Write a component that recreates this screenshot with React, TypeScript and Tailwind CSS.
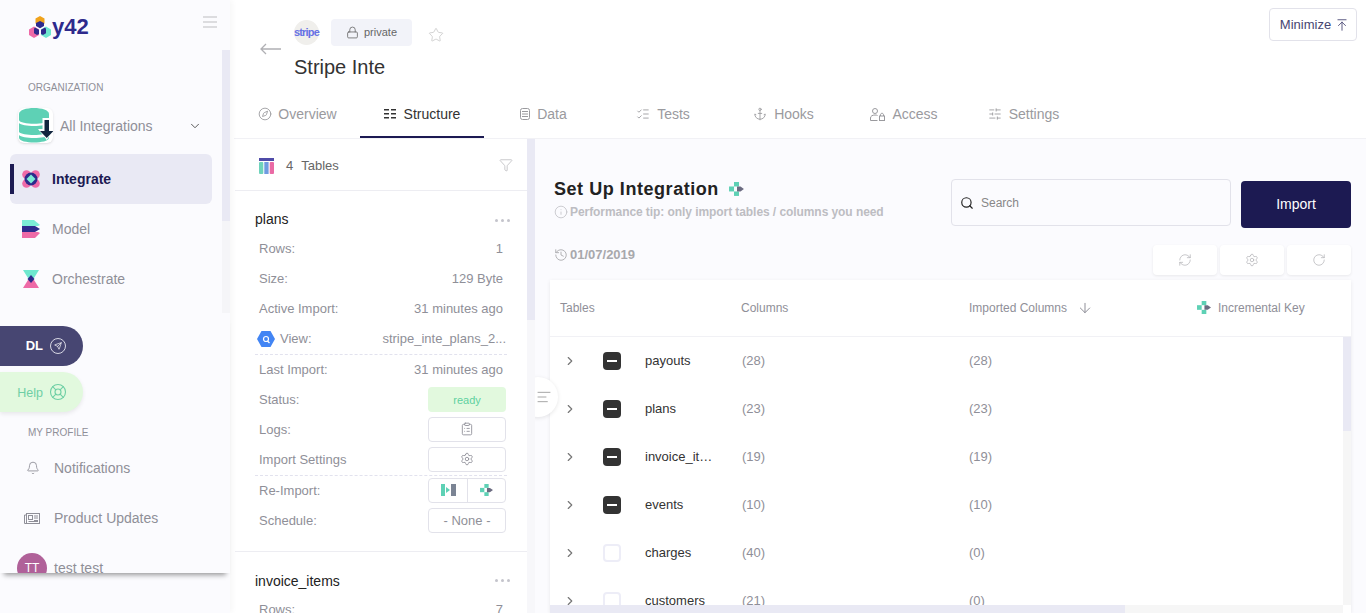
import React from 'react';
import {
  ArrowDown,
  ArrowUpToLine,
  Bell,
  ChevronDown,
  ChevronRight,
  ClipboardList,
  Compass,
  Filter,
  History,
  Info,
  LifeBuoy,
  ListChecks,
  Lock,
  Anchor,
  RefreshCw,
  RotateCw,
  Search,
  Send,
  Settings,
  SlidersHorizontal,
  Star,
  AlignLeft,
} from 'lucide-react';

const font = "font-['Liberation_Sans',Arial,sans-serif]";

const Logo = () => (
  <svg width="22" height="22" viewBox="0 0 22 22">
    <path d="M11 0l4.500 2.500v5L11 10 6.500 7.500v-5z" fill="#f0a31c" />
    <path d="M5 10.500l5 3v5.500l-5 3-5-3v-5.500z" fill="#ee6aa7" />
    <path d="M17 10.500l5 3v5.500l-5 3-5-3v-5.500z" fill="#6fe8cf" />
    <path d="M11 5l4 2v3l-3.500 2-.5 .3-.5-.3L7 10V7z" fill="#2e2a8c" />
    <path d="M6 11.500l4 2.300V18l-2 1-3-1.800v-4.500z" fill="#2e2a8c" />
    <path d="M16 11.500l-4 2.300V18l2 1 3-1.800v-4.500z" fill="#2e2a8c" />
  </svg>
);

const Burger = () => (
  <svg width="14" height="12" viewBox="0 0 14 12" fill="#dcdcdf">
    <rect width="14" height="2" />
    <rect y="5" width="14" height="2" />
    <rect y="10" width="14" height="2" />
  </svg>
);

const BackArrow = () => (
  <svg width="21" height="12" viewBox="0 0 21 12" fill="none" stroke="#b0b0b4" strokeWidth="1.300">
    <path d="M21 6H1M6 1L1 6l5 5" />
  </svg>
);

const IntegrateIcon = () => (
  <svg width="18" height="18" viewBox="0 0 18 18">
    <circle cx="4.500" cy="4.500" r="4.300" fill="#ee6aa7" />
    <circle cx="13.500" cy="4.500" r="4.300" fill="#ee6aa7" />
    <circle cx="4.500" cy="13.500" r="4.300" fill="#ee6aa7" />
    <circle cx="13.500" cy="13.500" r="4.300" fill="#ee6aa7" />
    <circle cx="9" cy="9" r="6.500" fill="#2e2a8c" />
    <path d="M9 4.500l4.500 4.500L9 13.500 4.500 9z" fill="#7cecd6" />
  </svg>
);

const ModelIcon = () => (
  <svg width="18" height="18" viewBox="0 0 18 18">
    <path d="M0 0h12l6 5-2 1H0z" fill="#7cecd6" />
    <path d="M0 12h16l2 1-5 5H0z" fill="#ee6aa7" />
    <path d="M0 6h13l5 3-5 3H0z" fill="#2e2a8c" />
  </svg>
);

const OrchestrateIcon = () => (
  <svg width="16" height="18" viewBox="0 0 16 18">
    <path d="M0 0h16l-5 8H5z" fill="#6fe8cf" />
    <path d="M5 10h6l5 8H0z" fill="#ee6aa7" />
    <path d="M8 5l3.500 4L8 13 4.500 9z" fill="#2e2a8c" />
  </svg>
);

const DbIcon = () => (
  <div className="flex h-[35px] w-[35px] items-center justify-center rounded-md bg-white shadow-sm">
    <svg width="35" height="35" viewBox="0 0 35 35">
      <path d="M1 6c0-8 30-8 30 0v6c-1 5-29 5-30 0z" fill="#5ed1b5" />
      <path d="M1 15c3 4 27 4 30 0v9c-3 4-27 4-30 0z" fill="#5ed1b5" />
      <path d="M1 27c3 4 27 4 30 0v3c-1 6-29 6-30 0z" fill="#5ed1b5" />
      <path d="M24.500 10h8.500v11h3L28.750 32 20 21h4.500z" fill="#fff" />
      <path d="M26.500 12h4.500v11h4.500L28.750 30 22 23h4.500z" fill="#12263f" />
    </svg>
  </div>
);

const NewsIcon = () => (
  <svg width="16" height="11" viewBox="0 0 16 11" fill="none" stroke="#8f8f98" strokeWidth="1">
    <rect x="2.500" y="0.500" width="13" height="10" />
    <path d="M2.500 2H.5v8.500h2" />
    <rect x="4.500" y="2.500" width="4" height="4" />
    <path d="M10 3h4M10 5h4M10 7.500h4M4.500 8.500H14" />
  </svg>
);

const DataIcon = () => (
  <svg width="10" height="12" viewBox="0 0 10 12" fill="none" stroke="currentColor" strokeWidth="1">
    <rect x="0.500" y="0.500" width="9" height="11" rx="2" />
    <path d="M2 3.500h6M2 6h6M2 8.500h6" />
  </svg>
);

const AccessIcon = () => (
  <svg width="15" height="13" viewBox="0 0 15 13" fill="none" stroke="currentColor" strokeWidth="1">
    <circle cx="5" cy="3" r="2.500" />
    <path d="M.5 12.500V10c0-2 2-3 4.500-3 1 0 2 .2 2.500 .5M.5 12.500h7" />
    <rect x="9.500" y="8" width="5" height="4.500" />
    <path d="M10.500 8V6.800c0-2 3-2 3 0V8" />
  </svg>
);

const IncrementalIcon = ({ size = 15 }: { size?: number }) => (
  <svg width={size} height={size * 0.93} viewBox="0 0 15 14">
    <rect x="5" y="0" width="5" height="4.500" fill="#5ed1b5" />
    <rect x="0" y="4.500" width="5" height="5" fill="#5ed1b5" />
    <rect x="5" y="9.500" width="5" height="4.500" fill="#5ed1b5" />
    <path d="M8 4.500h3.500L15 7l-3.500 2.500H8z" fill="#6b6b80" />
  </svg>
);

const FullImportIcon = () => (
  <svg width="15" height="12" viewBox="0 0 15 12">
    <rect x="0" y="0" width="4" height="12" fill="#5ed1b5" />
    <path d="M5 3l4 3-4 3z" fill="#5ed1b5" />
    <rect x="10" y="0" width="5" height="12" fill="#7b8494" />
  </svg>
);

const TablesIcon = () => (
  <svg width="15" height="16" viewBox="0 0 15 16">
    <rect x="0" y="0" width="15" height="3" fill="#4f4ba8" />
    <rect x="0" y="4" width="4.300" height="12" rx="1" fill="#6fd3bb" />
    <rect x="5.300" y="4" width="4.300" height="12" fill="#6f9be0" />
    <rect x="10.700" y="4" width="4.300" height="12" rx="1" fill="#ea6aa5" />
  </svg>
);

const StructureIcon = () => (
  <svg width="12" height="10" viewBox="0 0 12 10" fill="#333">
    <rect x="0" y="0" width="5" height="1.500" />
    <rect x="0" y="4" width="5" height="1.500" />
    <rect x="0" y="8" width="5" height="1.500" />
    <rect x="7" y="0" width="5" height="1.500" />
    <rect x="7" y="4" width="5" height="1.500" />
    <rect x="7" y="8" width="5" height="1.500" />
  </svg>
);

const BigQueryIcon = () => (
  <svg width="18" height="16" viewBox="0 0 18 16">
    <path d="M4.500 0h9L18 8l-4.500 8h-9L0 8z" fill="#4285f4" />
    <circle cx="9" cy="8" r="2.500" fill="none" stroke="#fff" strokeWidth="1.200" />
    <path d="M10.500 10l2 2" stroke="#fff" strokeWidth="1.200" />
  </svg>
);

const tabs = [
  { label: 'Overview', icon: <Compass size={14} strokeWidth={1.5} />, w: 'w-[125px]', gap: 'gap-[6px]' },
  { label: 'Structure', icon: <StructureIcon />, w: 'w-[124px]', gap: 'gap-[8px]', active: true },
  { label: 'Data', icon: <DataIcon />, w: 'w-[119px]', gap: 'gap-[7px]' },
  { label: 'Tests', icon: <ListChecks size={14} strokeWidth={1.5} />, w: 'w-[120px]', gap: 'gap-[7px]' },
  { label: 'Hooks', icon: <Anchor size={14} strokeWidth={1.5} />, w: 'w-[121px]', gap: 'gap-[7px]' },
  { label: 'Access', icon: <AccessIcon />, w: 'w-[120px]', gap: 'gap-[7px]' },
  { label: 'Settings', icon: <SlidersHorizontal size={14} strokeWidth={1.5} />, w: 'w-[119px]', gap: 'gap-[7px]' },
];

const rows = [
  { name: 'payouts', cols: 28, imported: 28, on: true },
  { name: 'plans', cols: 23, imported: 23, on: true },
  { name: 'invoice_it…', cols: 19, imported: 19, on: true },
  { name: 'events', cols: 10, imported: 10, on: true },
  { name: 'charges', cols: 40, imported: 0, on: false },
  { name: 'customers', cols: 21, imported: 0, on: false },
];

const InfoRow = ({ label, value }: { label: string; value: string }) => (
  <div className="flex h-[30px] items-center justify-between pr-[24px] pl-[24px] text-[13px] text-[#8f8f98]">
    <span>{label}</span>
    <span>{value}</span>
  </div>
);

const ActionRow = ({ label, children }: { label: string; children: React.ReactNode }) => (
  <div className="flex h-[30px] items-center justify-between pr-[21px] pl-[24px] text-[13px] text-[#8f8f98]">
    <span>{label}</span>
    {children}
  </div>
);

const Btn = ({ children }: { children: React.ReactNode }) => (
  <div className="-mt-[2px] flex h-[25px] w-[78px] items-center justify-center rounded border border-[#e2e2ea] bg-white text-[#8f8f98]">
    {children}
  </div>
);

const Dots = () => (
  <div className="flex gap-[3px]">
    <span className="h-[3px] w-[3px] rounded-full bg-[#c4c4cc]" />
    <span className="h-[3px] w-[3px] rounded-full bg-[#c4c4cc]" />
    <span className="h-[3px] w-[3px] rounded-full bg-[#c4c4cc]" />
  </div>
);

export default function App() {
  return (
    <div className={`flex h-screen w-full overflow-hidden bg-white ${font}`}>
      {/* Sidebar */}
      <aside className="z-20 flex w-[230px] shrink-0 flex-col bg-[#fbfbfe] shadow-[2px_0_6px_rgba(0,0,0,0.04)]">
        <div className="flex h-[313px] shrink-0">
          <div className="w-[222px] shrink-0">
            <div className="flex h-[57px] items-start justify-between pt-[16px] pr-[5px] pl-[29px]">
              <div className="flex items-center gap-[1px]">
                <Logo />
                <span className="text-[22px] leading-[22px] font-bold text-[#2e2a8c]">y42</span>
              </div>
              <Burger />
            </div>
            <div className="pt-[25px] pl-[28px] text-[10px] leading-[12px] text-[#8f8f98] uppercase">Organization</div>
            <div className="mt-[14px] flex h-[35px] items-center pr-[20px] pl-[18px]">
              <DbIcon />
              <span className="ml-[7px] flex-1 text-sm text-[#8f8f98]">All Integrations</span>
              <ChevronDown size={14} strokeWidth={1.5} className="text-[#444]" />
            </div>
            <div className="relative mt-[11px] ml-[10px] flex h-[50px] w-[202px] items-center rounded-md bg-[#e9e9f4] pl-[12px]">
              <span className="absolute top-[10px] left-0 h-[30px] w-[4px] bg-[#1c1a52]" />
              <IntegrateIcon />
              <span className="ml-[12px] text-sm font-bold text-[#1c1a52]">Integrate</span>
            </div>
            <div className="flex h-[50px] items-center pl-[22px]">
              <ModelIcon />
              <span className="ml-[12px] text-sm text-[#8f8f98]">Model</span>
            </div>
            <div className="flex h-[50px] items-center pl-[23px]">
              <OrchestrateIcon />
              <span className="ml-[13px] text-sm text-[#8f8f98]">Orchestrate</span>
            </div>
          </div>
          <div className="mt-[50px] w-[8px] bg-[#f5f5f8]">
            <div className="h-[171px] bg-[#e9e9f4]" />
          </div>
        </div>

        <div className="z-10 h-[260px] shrink-0 overflow-hidden bg-[#fbfbfe] pt-[13px] shadow-[0_6px_5px_-4px_rgba(0,0,0,0.4)]">
          <div className="flex h-[40px] w-[83px] items-center justify-end gap-[7px] rounded-r-full bg-[#474672] pr-[17px] text-[13px] font-bold text-white">
            DL
            <span className="flex h-[16px] w-[16px] items-center justify-center rounded-full border border-[#d8d8e4]">
              <Send size={8} />
            </span>
          </div>
          <div className="mt-[6px] flex h-[40px] w-[83px] items-center justify-end gap-[6px] rounded-r-full bg-[#e2f9de] pr-[16px] text-[12.500px] text-[#6fcfa5] shadow-[0_2px_4px_rgba(0,0,0,0.08)]">
            <span className="pt-[2px]">Help</span>
            <LifeBuoy size={18} strokeWidth={1.5} />
          </div>
          <div className="mt-[15px] pl-[28px] text-[10px] leading-[12px] text-[#8f8f98] uppercase">My Profile</div>
          <div className="mt-[4px] flex h-[50px] items-center pl-[25px] text-sm text-[#8f8f98]">
            <Bell size={14} className="ml-[1px]" strokeWidth={1.5} />
            <span className="ml-[14px]">Notifications</span>
          </div>
          <div className="flex h-[50px] items-center pl-[24px] text-sm text-[#8f8f98]">
            <NewsIcon />
            <span className="ml-[14px]">Product Updates</span>
          </div>
          <div className="mt-[10px] flex items-center pl-[17px] text-sm text-[#8f8f98]">
            <span className="flex h-[30px] w-[30px] items-center justify-center rounded-full bg-[#b06199] text-xs text-white">TT</span>
            <span className="ml-[7px]">test test</span>
          </div>
        </div>
      </aside>

      {/* Main */}
      <main className="ml-[4px] flex min-w-0 flex-1 flex-col">
        <header className="h-[139px] shrink-0 border-b border-[#f1f1f5] bg-white">
          <div className="flex h-[95px] items-start justify-between pr-[9px]">
            <div className="flex items-start">
              <div className="mt-[43px] ml-[26px]">
                <BackArrow />
              </div>
              <div className="ml-[13px] pt-[19px]">
                <div className="flex items-center">
                  <span className="flex h-[25px] w-[25px] items-center justify-center rounded-full bg-[#f0efec] text-[11px] font-bold tracking-[-0.8px] text-[#6772e5]">
                    stripe
                  </span>
                  <span className="ml-[12px] flex h-[27px] w-[81px] items-center justify-center gap-[5px] rounded bg-[#f2f3f9] text-[11px] text-[#666]">
                    <Lock size={13} strokeWidth={1.5} />
                    private
                  </span>
                  <Star size={16} strokeWidth={1.2} className="mt-[4px] ml-[16px] text-[#c8c8c8]" />
                </div>
                <div className="mt-[8px] text-xl leading-[26px] text-[#333]">Stripe Inte</div>
              </div>
            </div>
            <div className="mt-[8px] flex h-[33px] w-[88px] items-center justify-center gap-[4px] rounded border border-[#e2e2ea] pl-[3px] text-[13px] text-[#474672]">
              Minimize
              <ArrowUpToLine size={14} strokeWidth={1.5} />
            </div>
          </div>
          <nav className="flex h-[43px] pl-[1px]">
            {tabs.map((tab) => (
              <div
                key={tab.label}
                className={`flex h-full items-center justify-center border-b-2 pb-[3px] text-sm ${tab.gap} ${tab.w} ${
                  tab.active ? 'border-[#1c1a52] text-[#333]' : 'border-transparent text-[#9a9a9e]'
                }`}
              >
                {tab.icon}
                {tab.label}
              </div>
            ))}
          </nav>
        </header>

        <div className="flex min-h-0 flex-1">
          {/* Tables list */}
          <section className="relative z-10 w-[293px] shrink-0 overflow-hidden bg-white pl-[1px]">
            <div className="flex h-[52px] items-center justify-between border-b border-[#ededf2] pr-[14px] pl-[24px]">
              <div className="flex items-center pt-[3px] text-[13px] text-[#666]">
                <TablesIcon />
                <span className="ml-[12px]">4</span>
                <span className="ml-[8px]">Tables</span>
              </div>
              <Filter size={14} strokeWidth={1.3} className="text-[#b8b8bc]" />
            </div>
            <div className="flex h-[43px] items-end justify-between pr-[17px] pb-[5px] pl-[20px] text-sm text-[#222]">
              plans
              <div className="pb-[7px]">
                <Dots />
              </div>
            </div>
            <div>
              <InfoRow label="Rows:" value="1" />
              <InfoRow label="Size:" value="129 Byte" />
              <InfoRow label="Active Import:" value="31 minutes ago" />
              <div className="mr-[20px] ml-[20px] flex h-[31px] items-center justify-between border-b border-dashed border-[#e2e2ee] pr-[1px] pl-[2px] text-[13px] text-[#8f8f98]">
                <span className="flex items-center gap-[5px]">
                  <BigQueryIcon />
                  View:
                </span>
                <span>stripe_inte_plans_2...</span>
              </div>
              <InfoRow label="Last Import:" value="31 minutes ago" />
              <ActionRow label="Status:">
                <div className="-mt-[2px] flex h-[25px] w-[78px] items-center justify-center rounded bg-[#e2f9de] pt-[2px] text-[11px] text-[#5ed1a0]">ready</div>
              </ActionRow>
              <ActionRow label="Logs:">
                <Btn>
                  <ClipboardList size={14} strokeWidth={1.5} />
                </Btn>
              </ActionRow>
              <div className="mr-[20px] ml-[20px] flex h-[31px] items-center justify-between border-b border-dashed border-[#e2e2ee] pr-[1px] pl-[4px] text-[13px] text-[#8f8f98]">
                <span>Import Settings</span>
                <Btn>
                  <Settings size={14} strokeWidth={1.5} />
                </Btn>
              </div>
              <ActionRow label="Re-Import:">
                <div className="-mt-[2px] flex h-[25px] w-[78px] rounded border border-[#e2e2ea] bg-white">
                  <span className="flex w-[39px] items-center justify-center border-r border-[#e2e2ea]">
                    <FullImportIcon />
                  </span>
                  <span className="flex flex-1 items-center justify-center">
                    <IncrementalIcon size={13} />
                  </span>
                </div>
              </ActionRow>
              <ActionRow label="Schedule:">
                <Btn>
                  <span className="pt-[2px]">- None -</span>
                </Btn>
              </ActionRow>
            </div>
            <div className="mt-[15px] flex h-[44px] items-end justify-between border-t border-[#ededf2] pr-[17px] pb-[4px] pl-[20px] text-sm text-[#222]">
              invoice_items
              <div className="pb-[9px]">
                <Dots />
              </div>
            </div>
            <InfoRow label="Rows:" value="7" />
          </section>

          {/* List scrollbar */}
          <div className="relative z-10 w-[8px] shrink-0 bg-[#f7f7fa]">
            <div className="h-[181px] bg-[#e9e9f4]" />
          </div>

          {/* Set up */}
          <section className="relative flex min-w-0 flex-1 flex-col bg-[#fbfbfe] pr-[15px] pl-[15px]">
            <div className="absolute top-[238px] -left-[17px] flex h-[40px] w-[40px] items-center justify-end rounded-full bg-white pr-[6px] shadow-[0_1px_4px_rgba(0,0,0,0.1)]">
              <AlignLeft size={16} strokeWidth={1.3} className="text-[#999]" />
            </div>
            <div className="flex h-[106px] shrink-0 justify-between">
              <div className="pt-[38px] pl-[4px]">
                <div className="flex items-center text-lg leading-[24px] font-bold tracking-[0.55px] text-[#222]">
                  Set Up Integration
                  <span className="ml-[10px]">
                    <IncrementalIcon size={15} />
                  </span>
                </div>
                <div className="mt-[3px] flex items-center gap-[2px] text-xs font-bold tracking-[-0.07px] text-[#bdbdc2]">
                  <Info size={14} strokeWidth={1.3} />
                  Performance tip: only import tables / columns you need
                </div>
                <div className="mt-[25px] flex items-center gap-[2px] text-[13px] font-bold text-[#a8a8ac]">
                  <History size={14} strokeWidth={1.5} />
                  01/07/2019
                </div>
              </div>
              <div className="pt-[40px]">
                <div className="flex items-start">
                  <div className="flex h-[47px] w-[280px] items-center gap-[7px] rounded border border-[#e2e2ea] bg-[#fbfbfe] pl-[8px] text-xs text-[#888]">
                    <Search size={14} className="text-[#222]" />
                    Search
                  </div>
                  <div className="mt-[2px] ml-[10px] flex h-[47px] w-[110px] items-center justify-center rounded bg-[#1c1a52] pb-[2px] text-sm text-white">
                    Import
                  </div>
                </div>
              </div>
            </div>
            <div className="flex shrink-0 justify-end gap-[3px]">
              {[RefreshCw, Settings, RotateCw].map((Icon, i) => (
                <div key={i} className="flex h-[30px] w-[64px] items-center justify-center rounded bg-white text-[#b0b0b4] shadow-[0_1px_3px_rgba(0,0,0,0.08)]">
                  <Icon size={14} strokeWidth={1.2} />
                </div>
              ))}
            </div>

            {/* Table card */}
            <div className="mt-[5px] flex min-h-0 flex-1 flex-col bg-white shadow-[0_1px_4px_rgba(0,0,0,0.08)]">
              <div className="flex h-[57px] shrink-0 items-center border-b border-[#f1f1f5] text-xs text-[#8f8f98]">
                <span className="w-[191px] pl-[10px]">Tables</span>
                <span className="w-[228px]">Columns</span>
                <span className="flex w-[228px] items-center gap-[10px]">
                  Imported Columns
                  <ArrowDown size={16} strokeWidth={1.5} />
                </span>
                <span className="flex items-center gap-[7px]">
                  <IncrementalIcon size={14} />
                  Incremental Key
                </span>
              </div>
              <div className="flex min-h-0 flex-1">
                <div className="min-w-0 flex-1 overflow-hidden">
                  {rows.map((r) => (
                    <div key={r.name} className="flex h-[48px] items-center text-[13px]">
                      <ChevronRight size={14} className="ml-[13px] text-[#777]" />
                      <span
                        className={`ml-[26px] flex h-[18px] w-[18px] items-center justify-center rounded-sm ${
                          r.on ? 'bg-[#333]' : 'border-2 border-[#ededf7] bg-white'
                        }`}
                      >
                        {r.on && <span className="h-[2px] w-[10px] bg-white" />}
                      </span>
                      <span className="ml-[24px] w-[97px] text-[#333]">{r.name}</span>
                      <span className="w-[227px] text-[#8f8f98]">({r.cols})</span>
                      <span className="text-[#8f8f98]">({r.imported})</span>
                    </div>
                  ))}
                </div>
                <div className="w-[8px] shrink-0 bg-[#f6f6f6]">
                  <div className="h-[94px] bg-[#e9e9f4]" />
                </div>
              </div>
              <div className="mr-[8px] h-[8px] shrink-0 bg-[#f6f6f6]">
                <div className="h-full w-[575px] bg-[#e9e9f4]" />
              </div>
            </div>
          </section>
        </div>
      </main>
    </div>
  );
}
